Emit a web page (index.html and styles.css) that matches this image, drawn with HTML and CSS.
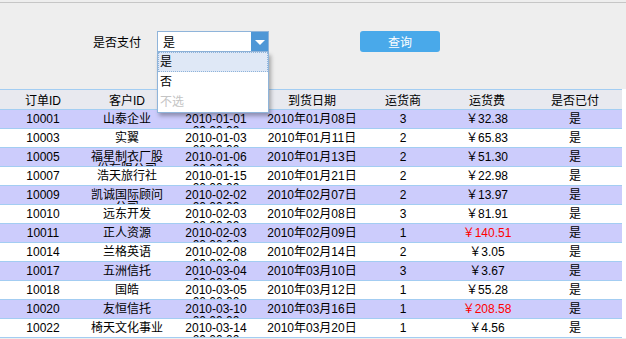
FILE: index.html
```html
<!DOCTYPE html>
<html lang="zh-CN">
<head>
  <meta charset="UTF-8" />
  <title>订单查询</title>
  <link rel="stylesheet" href="styles.css">
</head>
<body>

  <div class="toolbar">
    <div class="query">
      <label class="query-label">是否支付</label>
      <div class="combo">
        <div class="combo-box">
          <span class="combo-text">是</span>
          <span class="combo-arrow"></span>
        </div>
        <ul class="combo-list">
          <li class="active">是</li>
          <li>否</li>
          <li class="muted">不选</li>
        </ul>
      </div>
      <button class="btn-query">查询</button>
    </div>
  </div>

  <div class="grid">
    <table>
      <colgroup>
        <col style="width:86px"><col style="width:82px"><col style="width:96px"><col style="width:96px">
        <col style="width:86px"><col style="width:82px"><col style="width:94px">
      </colgroup>
      <thead>
        <tr>
          <th>订单ID</th><th>客户ID</th><th>订购日期</th><th>到货日期</th><th>运货商</th><th>运货费</th><th>是否已付</th>
        </tr>
      </thead>
      <tbody id="rows"></tbody>
    </table>
  </div>

  <script>
    const orders = [
      ['10001', '山泰企业', '2010-01-01', '2010年01月08日', 3, '32.38'],
      ['10003', '实翼', '2010-01-03', '2010年01月11日', 2, '65.83'],
      ['10005', '福星制衣厂股份有限公司', '2010-01-06', '2010年01月13日', 2, '51.30'],
      ['10007', '浩天旅行社', '2010-01-15', '2010年01月21日', 2, '22.98'],
      ['10009', '凯诚国际顾问公司', '2010-02-02', '2010年02月07日', 2, '13.97'],
      ['10010', '远东开发', '2010-02-03', '2010年02月08日', 3, '81.91'],
      ['10011', '正人资源', '2010-02-03', '2010年02月09日', 1, '140.51'],
      ['10014', '兰格英语', '2010-02-08', '2010年02月14日', 2, '3.05'],
      ['10017', '五洲信托', '2010-03-04', '2010年03月10日', 3, '3.67'],
      ['10018', '国皓', '2010-03-05', '2010年03月12日', 1, '55.28'],
      ['10020', '友恒信托', '2010-03-10', '2010年03月16日', 1, '208.58'],
      ['10022', '椅天文化事业', '2010-03-14', '2010年03月20日', 1, '4.56']
    ];

    let html = '';
    orders.forEach((o, i) => {
      // freight over 100 is shown in red
      const fee = Number(o[5]) > 100 ? 'cell high' : 'cell';
      html += `<tr class="${i % 2 === 0 ? 'odd' : ''}">
        <td><div class="cell">${o[0]}</div></td>
        <td><div class="cell wrap">${o[1]}</div></td>
        <td><div class="cell wrap">${o[2]} 00:00:00</div></td>
        <td><div class="cell">${o[3]}</div></td>
        <td><div class="cell">${o[4]}</div></td>
        <td><div class="${fee}">￥${o[5]}</div></td>
        <td><div class="cell">是</div></td>
      </tr>`;
    });
    document.getElementById('rows').innerHTML = html;
  </script>
</body>
</html>
```

FILE: styles.css
```css
body {
  margin: 0;
  background: #eeeeee;
  font-family: "Liberation Sans", "Noto Sans CJK SC", sans-serif;
  font-size: 12px;
  color: #000;
}
.toolbar {
  margin-top: 2px;
  height: 86px;
  border-top: 1px solid #c6c6c6;
  background: #eeeeee;
}
.query {
  display: flex;
  align-items: center;
  padding: 28px 0 0 93px;
  height: 21px;
}
.query-label {
  width: 64px;
  font-size: 12px;
}
.combo {
  position: relative;
  width: 112px;
  height: 21px;
}
.combo-box {
  box-sizing: border-box;
  height: 21px;
  border: 1px solid #8fb4da;
  background: #fff;
  display: flex;
  align-items: center;
}
.combo-text {
  flex: 1;
  padding-left: 5px;
}
.combo-arrow {
  width: 17px;
  height: 19px;
  background: #4f97d6;
  position: relative;
}
.combo-arrow::after {
  content: "";
  position: absolute;
  left: 4px;
  top: 8px;
  border-left: 5px solid transparent;
  border-right: 5px solid transparent;
  border-top: 5px solid #fff;
}
.combo-list {
  position: absolute;
  left: 0;
  top: 21px;
  z-index: 5;
  box-sizing: border-box;
  width: 112px;
  margin: 0;
  padding: 0;
  list-style: none;
  background: #fff;
  border: 1px solid #8fb4da;
  border-top: none;
  box-shadow: 2px 3px 4px rgba(0, 0, 0, 0.3);
}
.combo-list li {
  height: 20px;
  line-height: 20px;
  padding-left: 2px;
  box-sizing: border-box;
}
.combo-list li.active {
  background: #dfe8f6;
  border: 1px dotted #8fb4da;
  line-height: 18px;
  padding-left: 1px;
}
.combo-list li.muted {
  color: #c4c4c4;
}
.btn-query {
  margin-left: 91px;
  width: 80px;
  height: 21px;
  border: none;
  border-radius: 3px;
  background: #49a9ea;
  color: #fff;
  font-family: inherit;
  font-size: 12px;
  padding: 0;
}
.grid {
  background: #fff;
}
table {
  width: 622px;
  border-collapse: collapse;
  table-layout: fixed;
}
th {
  height: 19px;
  padding: 0;
  background: #e8e9ef;
  font-weight: normal;
  border-top: 1px solid #a3cdf2;
  border-bottom: 1px solid #a3cdf2;
}
td {
  padding: 0;
  text-align: center;
  border-bottom: 1px solid #a3cdf2;
}
tr.odd td {
  background: #ccccfc;
}
.cell {
  height: 18px;
  line-height: 18px;
  overflow: hidden;
}
.cell.wrap {
  box-sizing: border-box;
  line-height: 12px;
  padding-top: 3px;
}
.cell.high {
  color: #ff0000;
}
```
